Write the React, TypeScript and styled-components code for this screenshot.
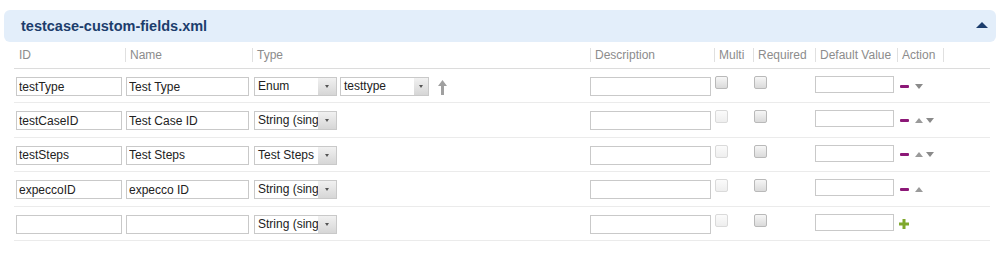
import React from "react";
import styled, { createGlobalStyle } from "styled-components";

const COLS = "111px 127px 338px 124px 39px 62px 82px 46px 47px";

interface FieldRow {
  id: string;
  name: string;
  type: string;
  enumName?: string;
  multiEnabled: boolean;
  up: boolean;
  down: boolean;
  remove: boolean;
}

const ROWS: FieldRow[] = [
  { id: "testType", name: "Test Type", type: "Enum", enumName: "testtype", multiEnabled: true, up: false, down: true, remove: true },
  { id: "testCaseID", name: "Test Case ID", type: "String (single line)", multiEnabled: false, up: true, down: true, remove: true },
  { id: "testSteps", name: "Test Steps", type: "Test Steps", multiEnabled: false, up: true, down: true, remove: true },
  { id: "expeccoID", name: "expecco ID", type: "String (single line)", multiEnabled: false, up: true, down: false, remove: true },
  { id: "", name: "", type: "String (single line)", multiEnabled: false, up: false, down: false, remove: false },
];

const HEADERS = ["ID", "Name", "Type", "Description", "Multi", "Required", "Default Value", "Action", ""];

const GlobalStyle = createGlobalStyle`
  html, body {
    margin: 0;
    padding: 0;
    background: #fff;
    font-family: "Liberation Sans", Arial, sans-serif;
    font-size: 12px;
    color: #222;
  }
`;

const Page = styled.div`
  width: 1000px;
  height: 257px;
  padding-top: 10px;
  box-sizing: border-box;
  overflow: hidden;
`;

const PanelHeader = styled.div`
  margin: 0 4px 0 4px;
  height: 32px;
  background: #e3eefa;
  border-radius: 6px;
  display: flex;
  align-items: center;
  justify-content: space-between;
  padding: 0 8px 0 17px;
`;

const Title = styled.div`
  font-size: 14.5px;
  font-weight: bold;
  color: #1c3d6c;
  line-height: 32px;
`;

const CollapseIcon = styled.div`
  width: 0;
  height: 0;
  border-left: 6px solid transparent;
  border-right: 6px solid transparent;
  border-bottom: 6px solid #1c3d6c;
  margin-top: -2px;
`;

const Table = styled.div`
  margin-left: 14px;
  width: 976px;
`;

const HeadRow = styled.div`
  display: grid;
  grid-template-columns: ${COLS};
  height: 27px;
  padding-top: 6px;
  box-sizing: border-box;
  border-bottom: 1px solid #dcdcdc;
`;

const HeadCell = styled.div<{ $first?: boolean }>`
  line-height: 14px;
  height: 14px;
  color: #8c8c8c;
  padding-left: ${({ $first }) => ($first ? 5 : 4)}px;
  border-left: ${({ $first }) => ($first ? "none" : "1px solid #e0e0e0")};
  white-space: nowrap;
`;

const Row = styled.div`
  display: grid;
  grid-template-columns: ${COLS};
  height: 34.4px;
  padding-top: 7px;
  box-sizing: border-box;
  border-bottom: 1px solid #ebebeb;
  align-items: start;
`;

const Cell = styled.div<{ $pad?: number }>`
  padding-left: ${({ $pad = 0 }) => $pad}px;
  display: flex;
  align-items: center;
`;

const TextInput = styled.input<{ $w: number; $h?: number }>`
  width: ${({ $w }) => $w}px;
  height: ${({ $h = 19 }) => $h}px;
  margin-top: ${({ $h = 19 }) => ($h === 19 ? 1 : 0)}px;
  box-sizing: border-box;
  border: 1px solid #c9c9c9;
  padding: 0 2px;
  font-family: "Liberation Sans", Arial, sans-serif;
  font-size: 12px;
  color: #222;
  background: #fff;
  outline: none;
  border-radius: 0;
`;

const Select = styled.div<{ $w: number }>`
  width: ${({ $w }) => $w}px;
  height: 19px;
  margin-top: 1px;
  box-sizing: border-box;
  border: 1px solid #c9c9c9;
  display: flex;
  background: #fff;
`;

const SelectValue = styled.div`
  flex: 1;
  min-width: 0;
  overflow: hidden;
  white-space: nowrap;
  padding-left: 3px;
  line-height: 17px;
  color: #222;
`;

const SelectButton = styled.div<{ $w: number }>`
  width: ${({ $w }) => $w}px;
  flex: none;
  background: linear-gradient(to bottom, #f1f1f1, #d6d6d6);
  display: flex;
  align-items: center;
  justify-content: center;
  &::after {
    content: "";
    width: 0;
    height: 0;
    border-left: 2.5px solid transparent;
    border-right: 2.5px solid transparent;
    border-top: 3px solid #555;
  }
`;

const TypeGroup = styled.div`
  display: flex;
  align-items: center;
  gap: 3px;
`;

const MoveUp = styled.svg`
  margin-left: 6px;
  margin-top: 2px;
`;

const Checkbox = styled.div<{ $disabled?: boolean }>`
  width: 13px;
  height: 13px;
  box-sizing: border-box;
  border: 1px solid ${({ $disabled }) => ($disabled ? "#dadada" : "#b9b9b9")};
  border-radius: 2px;
  background: ${({ $disabled }) =>
    $disabled ? "linear-gradient(#fbfbfb, #eeeeee)" : "linear-gradient(#f6f6f6, #dadada)"};
`;

const Actions = styled.div`
  height: 20px;
  display: flex;
  align-items: center;
  gap: 3px;
`;

const Minus = styled.div`
  width: 9px;
  height: 3px;
  border-radius: 1px;
  background: #8c1877;
  margin-right: 3px;
`;

const Arrow = styled.div<{ $dir: "up" | "down" }>`
  width: 0;
  height: 0;
  border-left: 4px solid transparent;
  border-right: 4px solid transparent;
  ${({ $dir }) =>
    $dir === "up" ? "border-bottom: 5px solid #9a9a9a;" : "border-top: 5px solid #8a8a8a;"}
`;

const Plus = styled.svg`
  margin-left: -1px;
`;

const App: React.FC = () => {
  return (
    <Page>
      <GlobalStyle />
      <PanelHeader>
        <Title>testcase-custom-fields.xml</Title>
        <CollapseIcon />
      </PanelHeader>
      <Table>
        <HeadRow>
          {HEADERS.map((h, idx) => (
            <HeadCell key={`head-${idx}`} $first={idx === 0}>
              {h}
            </HeadCell>
          ))}
        </HeadRow>
        {ROWS.map((row, idx) => (
          <Row key={`row-${idx}`}>
            <Cell $pad={2}>
              <TextInput $w={106} defaultValue={row.id} readOnly />
            </Cell>
            <Cell $pad={1}>
              <TextInput $w={123} defaultValue={row.name} readOnly />
            </Cell>
            <Cell $pad={2}>
              <TypeGroup>
                <Select $w={83}>
                  <SelectValue>{row.type}</SelectValue>
                  <SelectButton $w={18} />
                </Select>
                {row.enumName && (
                  <>
                    <Select $w={89}>
                      <SelectValue>{row.enumName}</SelectValue>
                      <SelectButton $w={14} />
                    </Select>
                    <MoveUp width="9" height="15" viewBox="0 0 9 15">
                      <polygon points="4.5,0 9,6 6,6 6,15 3,15 3,6 0,6" fill="#a0a0a0" />
                    </MoveUp>
                  </>
                )}
              </TypeGroup>
            </Cell>
            <Cell>
              <TextInput $w={121} readOnly />
            </Cell>
            <Cell $pad={1}>
              <Checkbox $disabled={!row.multiEnabled} />
            </Cell>
            <Cell $pad={1}>
              <Checkbox />
            </Cell>
            <Cell>
              <TextInput $w={79} $h={17} readOnly />
            </Cell>
            <Cell $pad={3}>
              <Actions>
                {row.remove ? (
                  <>
                    <Minus />
                    {row.up && <Arrow $dir="up" />}
                    {row.down && <Arrow $dir="down" />}
                  </>
                ) : (
                  <Plus width="10" height="10" viewBox="0 0 10 10">
                    <path d="M3.5 0h3v3.5H10v3H6.5V10h-3V6.5H0v-3h3.5z" fill="#7fa82c" />
                  </Plus>
                )}
              </Actions>
            </Cell>
            <Cell />
          </Row>
        ))}
      </Table>
    </Page>
  );
};

export default App;
